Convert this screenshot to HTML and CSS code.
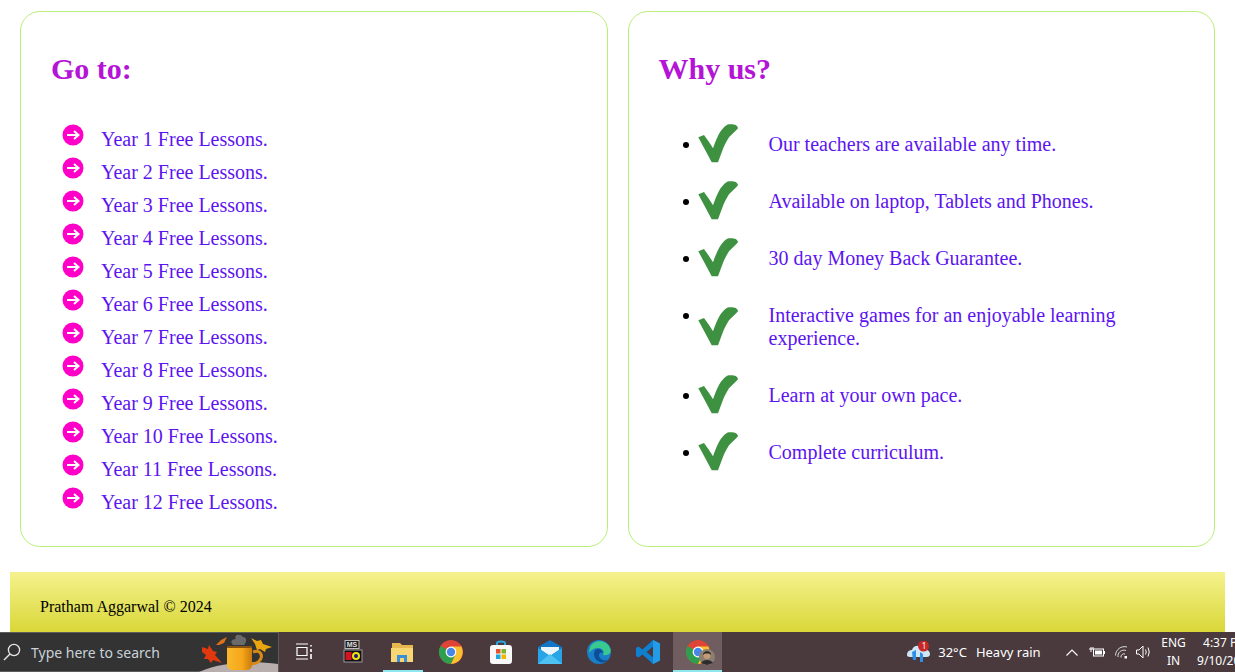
FILE: index.html
```html
<!DOCTYPE html>
<html lang="en">
<head>
    <meta charset="UTF-8">
    <meta name="viewport" content="width=device-width, initial-scale=1.0">
    <title>Lessons</title>
    <link rel="stylesheet" href="styles.css">
</head>
<body>
    <svg class="defs" width="0" height="0">
        <defs>
            <linearGradient id="mug" x1="0" x2="1" y1="0" y2="0">
                <stop offset="0" stop-color="#f9b92c"/>
                <stop offset="0.6" stop-color="#f7a71a"/>
                <stop offset="1" stop-color="#c97a0c"/>
            </linearGradient>
            <symbol id="go" viewBox="0 0 22 22">
                <circle cx="11" cy="11" r="10.5" fill="#ff00c8"/>
                <path d="M5 11H16M12 7L16.500 11L12 15" fill="none" stroke="#fff" stroke-width="2"/>
            </symbol>
            <symbol id="tick" viewBox="0 0 40 39">
                <path d="M0.300 13.300L6 11C9 15 12.500 20 15 24.300C18 16 21 8 26 3.300C28 1.500 29 0.300 31 0.200C34 0 36.500 0.300 37.700 1C39 2 40 3 40 4.300C37 8 33.500 10.500 31 13.300C28 18 26 22 24.300 26.700L20 38.300H13.700L9.300 30Z" fill="#3f9142"/>
            </symbol>
            <symbol id="chrome" viewBox="0 0 24 24">
                <circle cx="12" cy="12" r="12" fill="#de4437"/>
                <path d="M12 12L1.600 6A12 12 0 0 0 12 24L18 13.500Z" fill="#2f9e4f"/>
                <path d="M12 6.500H22.400A12 12 0 0 1 12 24L17.500 12Z" fill="#fbc02d"/>
                <circle cx="12" cy="12" r="5.400" fill="#fff"/>
                <circle cx="12" cy="12" r="4.200" fill="#4a86e8"/>
            </symbol>
        </defs>
    </svg>

    <main class="cards">
        <section class="card">
            <h2>Go to:</h2>
            <ul class="links">
                <li><svg class="go"><use href="#go"/></svg><a>Year 1 Free Lessons.</a></li>
                <li><svg class="go"><use href="#go"/></svg><a>Year 2 Free Lessons.</a></li>
                <li><svg class="go"><use href="#go"/></svg><a>Year 3 Free Lessons.</a></li>
                <li><svg class="go"><use href="#go"/></svg><a>Year 4 Free Lessons.</a></li>
                <li><svg class="go"><use href="#go"/></svg><a>Year 5 Free Lessons.</a></li>
                <li><svg class="go"><use href="#go"/></svg><a>Year 6 Free Lessons.</a></li>
                <li><svg class="go"><use href="#go"/></svg><a>Year 7 Free Lessons.</a></li>
                <li><svg class="go"><use href="#go"/></svg><a>Year 8 Free Lessons.</a></li>
                <li><svg class="go"><use href="#go"/></svg><a>Year 9 Free Lessons.</a></li>
                <li><svg class="go"><use href="#go"/></svg><a>Year 10 Free Lessons.</a></li>
                <li><svg class="go"><use href="#go"/></svg><a>Year 11 Free Lessons.</a></li>
                <li><svg class="go"><use href="#go"/></svg><a>Year 12 Free Lessons.</a></li>
            </ul>
        </section>
        <section class="card">
            <h2>Why us?</h2>
            <ul class="reasons">
                <li><i class="dot"></i><svg class="tick"><use href="#tick"/></svg><span>Our teachers are available any time.</span></li>
                <li><i class="dot"></i><svg class="tick"><use href="#tick"/></svg><span>Available on laptop, Tablets and Phones.</span></li>
                <li><i class="dot"></i><svg class="tick"><use href="#tick"/></svg><span>30 day Money Back Guarantee.</span></li>
                <li><i class="dot"></i><svg class="tick"><use href="#tick"/></svg><span>Interactive games for an enjoyable learning experience.</span></li>
                <li><i class="dot"></i><svg class="tick"><use href="#tick"/></svg><span>Learn at your own pace.</span></li>
                <li><i class="dot"></i><svg class="tick"><use href="#tick"/></svg><span>Complete curriculum.</span></li>
            </ul>
        </section>
    </main>

    <footer class="footer">Pratham Aggarwal © 2024</footer>

    <div class="taskbar">
        <div class="search">
            <svg class="lens" viewBox="0 0 18 18" width="18" height="18"><circle cx="11" cy="7" r="5.600" fill="none" stroke="#e8e8e8" stroke-width="1.300"/><path d="M7 11L1 17" stroke="#e8e8e8" stroke-width="1.500"/></svg>
            <span>Type here to search</span>
            <svg class="cup" viewBox="0 0 79 40" width="79" height="40">
                <path d="M0 40C20 31 50 28 79 32V40Z" fill="#b9aeae"/>
                <path d="M34 13C30 9 34 7 37 7C34 3 41 1 44 5C48 5 48 10 45 13Z" fill="#6a6a6a"/>
                <path d="M3 15L9 17L10 13L14 19L18 20L16 23L23 31L14 28L12 31L9 27L5 27L7 23L3 20Z" fill="#e2380f"/>
                <path d="M17 13L22 8L28 5L25 11L20 13Z" fill="#d9701a"/>
                <path d="M52 6L58 9L62 8L64 12L73 15L67 17L66 20L61 17L58 18L56 12Z" fill="#eba50f"/>
                <path d="M54 20C62 17 64 24 61 28C59 31 55 32 51 32" fill="none" stroke="#d98a14" stroke-width="3"/>
                <path d="M28 14H53V32C53 36 51 38 47 38H34C30 38 28 36 28 32Z" fill="url(#mug)"/>
                <path d="M28 14H53V16H28Z" fill="#8a5312"/>
            </svg>
        </div>
        <div class="apps">
            <div class="app">
                <svg viewBox="0 0 18 18" width="18" height="18" fill="none" stroke="#fff" stroke-width="1.200"><path d="M1 1H13M1 16H13M2 4.500H12V12.500H2Z"/><path d="M16 2V3.500M16 6V9M16 11V16" stroke-width="1.600"/></svg>
            </div>
            <div class="app">
                <svg viewBox="0 0 20 24" width="20" height="24"><rect x="2" y="0.500" width="14" height="8" fill="#222" stroke="#bbb"/><text x="9" y="7" font-size="7" font-family="Liberation Sans" font-weight="700" text-anchor="middle" fill="#ddd">MS</text><rect x="1" y="10" width="18" height="12" fill="#111" stroke="#999"/><rect x="2.500" y="12" width="6" height="8" fill="#d8121f"/><circle cx="13" cy="16" r="4" fill="#f2e20c"/><circle cx="13" cy="16" r="2" fill="#1a1a7a"/></svg>
            </div>
            <div class="app on">
                <svg viewBox="0 0 24 24" width="24" height="24"><path d="M2 3H10L12 5H23V10H2Z" fill="#e8b84f"/><path d="M1 8H23V22H1Z" fill="#f7d673"/><path d="M7 22V15H17V22H14V18H10V22Z" fill="#3a8fd8"/></svg>
                <b class="tab-line"></b>
            </div>
            <div class="app"><svg width="24" height="24"><use href="#chrome"/></svg></div>
            <div class="app">
                <svg viewBox="0 0 24 24" width="24" height="24"><path d="M8 7V3C8 1 16 1 16 3V7" fill="none" stroke="#2aa7e0" stroke-width="2"/><rect x="1" y="5" width="22" height="19" rx="3" fill="#f8f8f8"/><rect x="7" y="9" width="4.500" height="4.500" fill="#e8512a"/><rect x="12.500" y="9" width="4.500" height="4.500" fill="#7cb82f"/><rect x="7" y="14.500" width="4.500" height="4.500" fill="#1fa4e4"/><rect x="12.500" y="14.500" width="4.500" height="4.500" fill="#f7b500"/></svg>
            </div>
            <div class="app">
                <svg viewBox="0 0 24 24" width="24" height="24"><path d="M0 7L12 0L24 7V24H0Z" fill="#1276c4"/><path d="M3 7H21V10L12 16L3 10Z" fill="#eaf6fc"/><path d="M0 8L12 16L24 8V24H0Z" fill="#27a5e6"/><path d="M0 24L12 14L24 24Z" fill="#4fc2f2"/></svg>
            </div>
            <div class="app">
                <svg viewBox="0 0 24 24" width="24" height="24"><circle cx="12" cy="12" r="12" fill="#1a7fc9"/><path d="M3 7C7 -1 20 -1 23.500 9C24.500 14 21 16 16 15C18 11 15 8 11 8C7 8 4 10 2 13Z" fill="#39c98f"/><path d="M11 9C7 9 6 14 8 18C11 23 17 24 21 20C16 21 12 19 12 15C12 13 14 12 16 13C16 11 14 9 11 9Z" fill="#0c4f96"/></svg>
            </div>
            <div class="app">
                <svg viewBox="0 0 24 24" width="24" height="24"><path d="M17 0L24 3.500V20.500L17 24L6.500 14.500L2.500 17.500L0 16V8L2.500 6.500L6.500 9.500ZM17 6.500L10.500 12L17 17.500Z" fill="#0f7fd0"/><path d="M17 0L24 3.500V20.500L17 24Z" fill="#239be6"/></svg>
            </div>
            <div class="app active">
                <svg width="24" height="24"><use href="#chrome"/></svg>
                <svg class="avatar" viewBox="0 0 16 16" width="16" height="16"><circle cx="8" cy="8" r="8" fill="#8a7f70"/><circle cx="8" cy="6.500" r="3.500" fill="#c49a78"/><path d="M4 6C4 1 12 1 12 6L10 4.500H6Z" fill="#2c2421"/><path d="M2 14C4 10 12 10 14 14L8 16Z" fill="#2c2c30"/></svg>
                <b class="tab-line"></b>
            </div>
        </div>
        <div class="tray">
            <div class="weather">
                <svg viewBox="0 0 24 22" width="24" height="22"><path d="M1 14C1 10 4 9 6 9C7 4 15 3 17 8C21 8 24 10 24 13C24 16 21 16 20 16H4C2 16 1 15 1 14Z" fill="#cfe6f7"/><path d="M6 11L10 9V19H7ZM14 11L17 13V21H14Z" fill="#2f8fe6"/><circle cx="17.500" cy="5" r="5.500" fill="#c62828"/></svg>
                <em class="badge">1</em>
            </div>
            <span class="temp">32°C</span>
            <span class="rain">Heavy rain</span>
            <svg class="caret" viewBox="0 0 12 7" width="12" height="7" fill="none" stroke="#fff" stroke-width="1.100"><path d="M0.500 6.500L6 1L11.500 6.500"/></svg>
            <svg class="battery" viewBox="0 0 16 10" width="16" height="10"><path d="M0 2H2V0M2 2H4V0M2 2V5" fill="none" stroke="#fff"/><rect x="4.500" y="2" width="10" height="7" fill="none" stroke="#fff"/><rect x="6" y="3.500" width="7" height="4" fill="#fff"/><rect x="15" y="4" width="1" height="3" fill="#fff"/></svg>
            <svg class="wifi" viewBox="0 0 14 13" width="14" height="13" fill="none" stroke="#ddd"><path d="M0.500 9.500A9 9 0 0 1 12 1M3 11A6 6 0 0 1 11 4.500M6 11.500A3 3 0 0 1 10 8"/><rect x="9.500" y="10" width="2.500" height="2.500" fill="#fff" stroke="none"/></svg>
            <svg class="sound" viewBox="0 0 16 14" width="16" height="14" fill="none" stroke="#fff"><path d="M0.500 5H3L7 1V13L3 9H0.500Z"/><path d="M9.500 4.500Q11 7 9.500 9.500M12 2.500Q14.500 7 12 11.500"/></svg>
            <div class="lang"><span>ENG</span><span>IN</span></div>
            <div class="clock"><span>4:37 PM</span><span>9/10/2024</span></div>
        </div>
    </div>
</body>
</html>
```

FILE: styles.css
```css
html, body {
    margin: 0;
    height: 100%;
    overflow: hidden;
    background-color: white;
}
body {
    font-family: "Liberation Serif", "Times New Roman", serif;
}
.defs {
    position: absolute;
}

.cards {
    display: grid;
    grid-template-columns: 1fr 1fr;
    gap: 20px;
    padding: 11px 20px 0;
}
.card {
    border: 1px solid #b9ee78;
    border-radius: 20px;
    padding: 30px 30px 27px;
    height: 536px;
    box-sizing: border-box;
}
.card h2 {
    margin: 9px 0 0;
    font-size: 30px;
    line-height: 36px;
    color: #b414d6;
}

.links {
    list-style: none;
    margin: 36px 0 0;
    padding: 0 0 0 11px;
}
.links li {
    display: flex;
    height: 33px;
    font-size: 20px;
    line-height: 33px;
    color: #5c14f0;
}
.go {
    width: 22px;
    height: 22px;
    margin: 1px 17px 0 0;
}

.reasons {
    list-style: none;
    margin: 28px 0 0;
    padding: 0 60px 0 24px;
}
.reasons li {
    display: flex;
    align-items: center;
    font-size: 20px;
    line-height: 23px;
    color: #5c14f0;
}
.reasons span {
    padding: 18px 0 16px;
}
.dot {
    align-self: flex-start;
    flex: none;
    width: 6px;
    height: 6px;
    margin: 27px 9px 0 0;
    border-radius: 50%;
    background-color: black;
}
.tick {
    flex: none;
    width: 40px;
    height: 39px;
    margin-right: 31px;
}

.footer {
    margin: 25px 10px 0;
    height: 100px;
    padding: 26px 30px 0;
    box-sizing: border-box;
    background: linear-gradient(#f5f28e, #d9d737 60%);
    font-size: 16px;
    line-height: 18px;
    color: black;
}

/* windows taskbar sits on top of the page */
.taskbar {
    position: fixed;
    left: 0;
    right: 0;
    bottom: 0;
    height: 40px;
    display: flex;
    background-color: #4a3a3e;
    font-family: "Noto Sans", "Open Sans", sans-serif;
    color: white;
}
.search {
    position: relative;
    flex: none;
    display: flex;
    align-items: center;
    width: 279px;
    box-sizing: border-box;
    padding-left: 3px;
    background-color: #333;
    border: 1px solid #5c5c5c;
    border-left: none;
    font-size: 14px;
    color: #c9d2da;
}
.lens {
    margin-right: 10px;
}
.cup {
    position: absolute;
    right: 0;
    top: -1px;
}
.apps {
    display: flex;
}
.app {
    position: relative;
    width: 49.250px;
    display: flex;
    align-items: center;
    justify-content: center;
}
.active {
    background-color: #6f5d5f;
}
.tab-line {
    position: absolute;
    left: 0;
    right: 0;
    bottom: 0;
    height: 2px;
    background-color: #8ee6ee;
}
.on .tab-line {
    left: 5px;
    right: 4px;
}
.avatar {
    position: absolute;
    left: 26px;
    top: 17px;
}

.tray {
    display: flex;
    align-items: center;
    flex: 1;
    min-width: 0;
    overflow: hidden;
    padding-left: 184px;
    font-size: 13px;
    white-space: nowrap;
}
.weather {
    position: relative;
    flex: none;
    width: 24px;
    height: 22px;
    margin-right: 8px;
}
.badge {
    position: absolute;
    right: 4px;
    top: 0;
    font-size: 8px;
    line-height: 10px;
    font-style: normal;
}
.rain {
    margin: 0 25px 0 9px;
}
.caret {
    margin: 0 11px 0 0;
    flex: none;
}
.battery {
    margin-right: 10px;
    flex: none;
}
.wifi {
    margin-right: 7px;
    flex: none;
}
.sound {
    margin-right: 8px;
    flex: none;
}
.lang, .clock {
    display: flex;
    flex-direction: column;
    align-items: center;
    flex: none;
    font-size: 12px;
    line-height: 18px;
}
.lang {
    width: 28px;
    margin-right: 8px;
}
.clock {
    width: 60px;
}
```
